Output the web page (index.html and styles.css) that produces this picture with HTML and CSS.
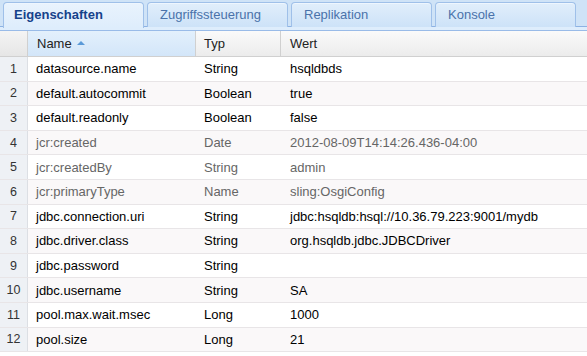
FILE: index.html
```html
<!DOCTYPE html>
<html>
<head>
<meta charset="utf-8">
<link rel="stylesheet" href="styles.css">
</head>
<body>
<div class="panel">
  <div class="tabstrip">
    <div class="tab active">Eigenschaften</div>
    <div class="tab">Zugriffssteuerung</div>
    <div class="tab">Replikation</div>
    <div class="tab">Konsole</div>
  </div>
  <div class="tabband"></div>
  <div class="grid">
    <div class="row head">
      <div class="c num"></div>
      <div class="c name sorted">Name <span class="arrow"></span></div>
      <div class="c typ">Typ</div>
      <div class="c val">Wert</div>
    </div>
    <div class="row"><div class="c num">1</div><div class="c name">datasource.name</div><div class="c typ">String</div><div class="c val">hsqldbds</div></div>
    <div class="row alt"><div class="c num">2</div><div class="c name">default.autocommit</div><div class="c typ">Boolean</div><div class="c val">true</div></div>
    <div class="row"><div class="c num">3</div><div class="c name">default.readonly</div><div class="c typ">Boolean</div><div class="c val">false</div></div>
    <div class="row alt prot"><div class="c num">4</div><div class="c name">jcr:created</div><div class="c typ">Date</div><div class="c val">2012-08-09T14:14:26.436-04:00</div></div>
    <div class="row prot"><div class="c num">5</div><div class="c name">jcr:createdBy</div><div class="c typ">String</div><div class="c val">admin</div></div>
    <div class="row alt prot"><div class="c num">6</div><div class="c name">jcr:primaryType</div><div class="c typ">Name</div><div class="c val">sling:OsgiConfig</div></div>
    <div class="row"><div class="c num">7</div><div class="c name">jdbc.connection.uri</div><div class="c typ">String</div><div class="c val">jdbc:hsqldb:hsql://10.36.79.223:9001/mydb</div></div>
    <div class="row alt"><div class="c num">8</div><div class="c name">jdbc.driver.class</div><div class="c typ">String</div><div class="c val">org.hsqldb.jdbc.JDBCDriver</div></div>
    <div class="row"><div class="c num">9</div><div class="c name">jdbc.password</div><div class="c typ">String</div><div class="c val"></div></div>
    <div class="row alt"><div class="c num">10</div><div class="c name">jdbc.username</div><div class="c typ">String</div><div class="c val">SA</div></div>
    <div class="row"><div class="c num">11</div><div class="c name">pool.max.wait.msec</div><div class="c typ">Long</div><div class="c val">1000</div></div>
    <div class="row alt"><div class="c num">12</div><div class="c name">pool.size</div><div class="c typ">Long</div><div class="c val">21</div></div>
  </div>
</div>
</body>
</html>
```

FILE: styles.css
```css
html, body {
  margin: 0;
  padding: 0;
  background: #ffffff;
}
.panel {
  width: 587px;
  height: 356px;
  overflow: hidden;
  font-family: "Liberation Sans", Arial, sans-serif;
}
.tabstrip {
  display: flex;
  gap: 3px;
  height: 27px;
  padding: 2px 0 0 3px;
  box-sizing: border-box;
  background: #cfe3f7;
  border-bottom: 1px solid #8db2e3;
}
.tab {
  width: 141px;
  box-sizing: border-box;
  height: 25px;
  border: 1px solid #9fc0e9;
  border-bottom: none;
  border-radius: 4px 4px 0 0;
  background: linear-gradient(#e1eefb, #cde2f8);
  box-shadow: inset 0 1px 0 #eef6fe;
  color: #4a72aa;
  font-size: 13px;
  line-height: 24px;
  padding-left: 12px;
}
.tab.active {
  background: linear-gradient(#e9f3fd, #deedfc);
  color: #15428b;
  font-weight: bold;
  height: 26px;
  margin-bottom: -1px;
  padding-left: 10px;
}
.tabband {
  height: 3px;
  background: #deedfc;
  border-bottom: 1px solid #99bbe8;
}
.grid {
  display: flex;
  flex-direction: column;
}
.row {
  display: flex;
  height: 24.6px;
  flex: none;
  box-sizing: border-box;
  border-bottom: 1px solid #e8e5e7;
  font-size: 13px;
  color: #000;
  background: #fff;
}
.row.alt {
  background: #faf8f9;
}
.row.prot {
  color: #666;
}
.row.head {
  height: 26px;
  background: linear-gradient(#fafafa, #ececec);
  border-bottom: 1px solid #d0d0d0;
  color: #222;
}
.c {
  display: flex;
  align-items: center;
  box-sizing: border-box;
  white-space: nowrap;
  overflow: hidden;
}
.num {
  width: 28px;
  justify-content: center;
  background: #eef1f5;
  border-right: 1px solid #dcdfe4;
  color: #333;
  font-size: 12.5px;
}
.name {
  width: 168px;
  padding-left: 8px;
}
.typ {
  width: 85px;
  padding-left: 8px;
}
.val {
  flex: 1;
  padding-left: 9px;
}
.head .c {
  border-right: 1px solid #d0d0d0;
}
.head .num {
  background: linear-gradient(#f4f4f4, #e6e6e6);
}
.head .name {
  padding-left: 9px;
}
.head .sorted {
  background: linear-gradient(#e3f0fc, #d3e6f9);
}
.head .val {
  border-right: none;
}
.arrow {
  display: inline-block;
  width: 0;
  height: 0;
  margin-left: 5px;
  margin-top: -2px;
  border-left: 4px solid transparent;
  border-right: 4px solid transparent;
  border-bottom: 4px solid #5a9ad8;
}
```
